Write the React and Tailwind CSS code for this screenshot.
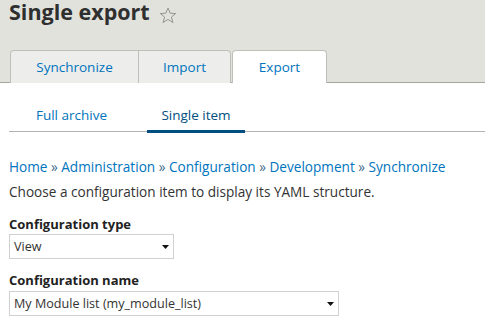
import React from "react";

const font = { fontFamily: '"Open Sans", "Noto Sans", sans-serif' };

function Star() {
  return (
    <svg width="20" height="17" viewBox="0 0 20 19" className="ml-[8px] mt-[5px]">
      <path
        d="M10 1.2 L12.5 7 L18.6 7.3 L13.8 11.2 L15.5 17.4 L10 13.9 L4.5 17.4 L6.2 11.2 L1.4 7.3 L7.5 7 Z"
        fill="none"
        stroke="#8c8c88"
        strokeWidth="1"
        strokeLinejoin="round"
      />
    </svg>
  );
}

function Select({ value, width }) {
  return (
    <div
      className={`flex h-[25px] items-center justify-between border border-[#d0d0d0] bg-white pl-[4px] pr-[4px] text-[12.6px] leading-[20px] text-[#333] ${width}`}
    >
      <span>{value}</span>
      <svg width="7" height="4" viewBox="0 0 7 4">
        <path d="M0 0 H7 L3.5 4 Z" fill="#111" />
      </svg>
    </div>
  );
}

export default function App() {
  return (
    <div className="h-[324px] w-[485px] overflow-hidden bg-white" style={font}>
      <div className="border-b border-[#a6a6a0] bg-[#e1e2dc]">
        <div className="flex h-[50px] items-start pl-[9px] pt-[2px]">
          <h1 className="text-[21.5px] font-bold leading-[20px] text-[#2f2f2f]">Single export</h1>
          <Star />
        </div>
        <div className="-mb-px flex h-[33px] pl-[10px] text-[13.5px]">
          <div className="flex w-[129px] items-center justify-center rounded-tl-[4px] border border-b-0 border-[#bfbfba] bg-[#ededeb] text-[#0074bd]">
            Synchronize
          </div>
          <div className="-ml-px flex w-[93px] items-center justify-center rounded-tr-[4px] border border-b-0 border-[#bfbfba] bg-[#ededeb] text-[#0074bd]">
            Import
          </div>
          <div className="ml-px flex w-[95px] items-center justify-center rounded-t-[4px] border border-b-0 border-[#bfbfba] bg-white text-[#0074bd]">
            Export
          </div>
        </div>
      </div>

      <div className="ml-[9px] flex h-[49px] border-b border-[#b3b3b3] text-[13.5px] leading-[20px]">
        <div className="flex w-[125px] justify-center pt-[22px] text-[#0074bd]">Full archive</div>
        <div className="-mb-[2px] ml-[13px] flex w-[98px] justify-center border-b-[3px] border-[#004f80] pt-[22px] text-[#004f80]">
          Single item
        </div>
      </div>

      <div className="px-[9px] pt-[25px] leading-[20px]">
        <div className="text-[13.6px] text-[#0074bd]">
          Home <span className="text-[#3d6b8a]">»</span> Administration <span className="text-[#3d6b8a]">»</span> Configuration{" "}
          <span className="text-[#3d6b8a]">»</span> Development <span className="text-[#3d6b8a]">»</span> Synchronize
        </div>
        <div className="mt-[5px] text-[13.6px] text-[#333]">Choose a configuration item to display its YAML structure.</div>

        <div className="mt-[12px] text-[13px] font-bold text-[#222]">Configuration type</div>
        <Select value="View" width="w-[165px]" />

        <div className="mt-[11px] text-[13px] font-bold text-[#222]">Configuration name</div>
        <div className="mt-[1px]">
          <Select value="My Module list (my_module_list)" width="w-[330px]" />
        </div>
      </div>
    </div>
  );
}
